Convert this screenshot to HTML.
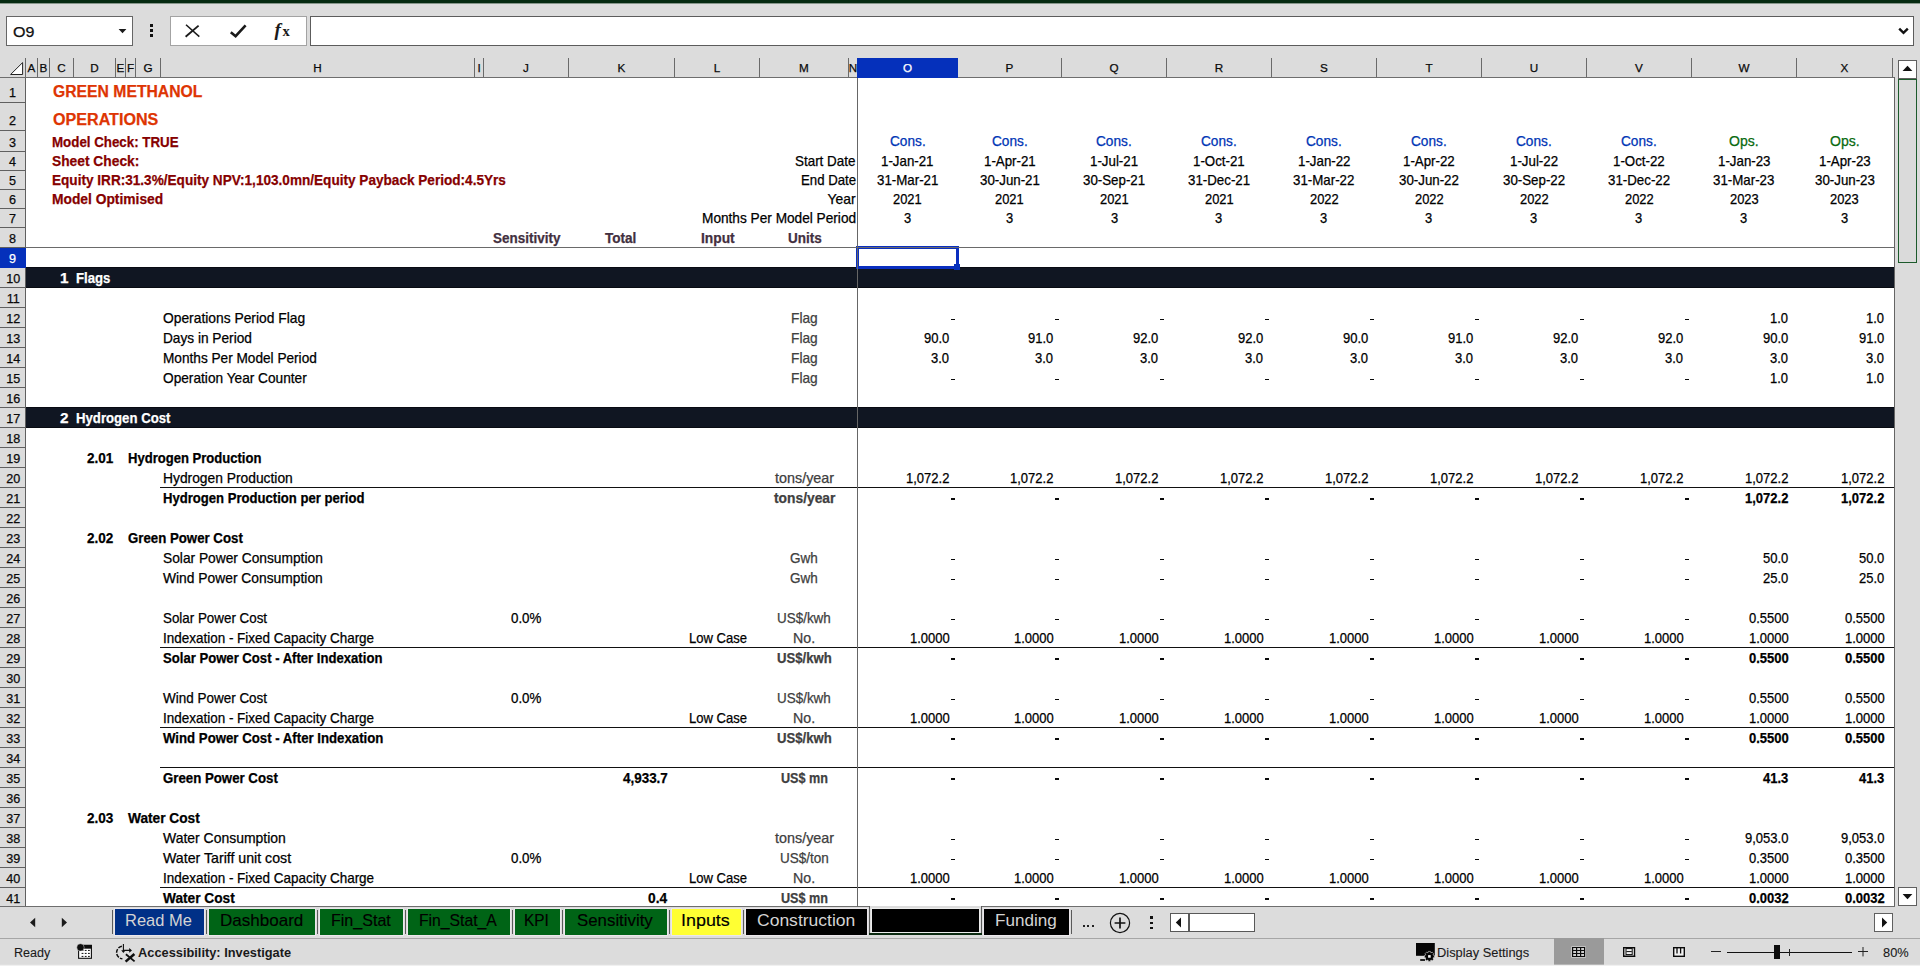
<!DOCTYPE html>
<html><head><meta charset="utf-8"><title>Operations</title>
<style>html,body{margin:0;padding:0}
body{width:1920px;height:966px;background:#dcdcdc;position:relative;overflow:hidden;font-family:"Liberation Sans",sans-serif}
body>div,body>svg,body>span{position:absolute;display:block}
span.t{white-space:pre;line-height:20px;transform-origin:0 0}
span.fx{font-family:"Liberation Serif",serif;font-style:italic;font-weight:700}
</style></head><body>
<div style="left:0px;top:0px;width:1920px;height:3px;background:#052a10;"></div>
<div style="left:0px;top:3px;width:1920px;height:1px;background:#86968a;"></div>
<div style="left:6px;top:16px;width:125px;height:28px;background:#fff;border:1px solid #666;"></div>
<svg style="left:118px;top:28px" width="9" height="6" viewBox="0 0 9 6"><path d="M0.6 1 H8.4 L4.5 5.2 Z" fill="#1a1a1a"/></svg>
<div style="left:149.8px;top:24.3px;width:3.4px;height:2.6px;background:#111;"></div>
<div style="left:149.8px;top:29.3px;width:3.4px;height:2.6px;background:#111;"></div>
<div style="left:149.8px;top:34.3px;width:3.4px;height:2.6px;background:#111;"></div>
<div style="left:170px;top:16px;width:135px;height:28px;background:#fff;border:1px solid #a3a3a3;"></div>
<svg style="left:184px;top:23px" width="18" height="16" viewBox="0 0 18 16"><path d="M2 1.8 L15.3 13.6" stroke="#1a1a1a" stroke-width="1.5" fill="none"/><path d="M14.6 2.6 L1.6 13.8" stroke="#1a1a1a" stroke-width="1.9" fill="none"/></svg>
<svg style="left:229px;top:23px" width="19" height="16" viewBox="0 0 19 16"><path d="M1.8 9.2 L6.6 13.2 L16.6 2.4" stroke="#1a1a1a" stroke-width="2.6" fill="none" stroke-linejoin="miter"/></svg>
<div style="left:310px;top:16px;width:1602px;height:28px;background:#fff;border:1px solid #5c5c5c;"></div>
<svg style="left:1898px;top:27px" width="11" height="8" viewBox="0 0 11 8"><path d="M1.2 1.6 L5.5 5.8 L9.8 1.6" stroke="#111" stroke-width="2.4" fill="none"/></svg>
<div style="left:26px;top:78px;width:1868px;height:829px;background:#fff;"></div>
<div style="left:0px;top:77px;width:1895px;height:1px;background:#6e6e6e;"></div>
<div style="left:25px;top:58px;width:1px;height:19px;background:#6a6a6a;"></div>
<div style="left:37px;top:58px;width:1px;height:19px;background:#6a6a6a;"></div>
<div style="left:49px;top:58px;width:1px;height:19px;background:#6a6a6a;"></div>
<div style="left:73px;top:58px;width:1px;height:19px;background:#6a6a6a;"></div>
<div style="left:115px;top:58px;width:1px;height:19px;background:#6a6a6a;"></div>
<div style="left:125px;top:58px;width:1px;height:19px;background:#6a6a6a;"></div>
<div style="left:135px;top:58px;width:1px;height:19px;background:#6a6a6a;"></div>
<div style="left:160px;top:58px;width:1px;height:19px;background:#6a6a6a;"></div>
<div style="left:474px;top:58px;width:1px;height:19px;background:#6a6a6a;"></div>
<div style="left:483px;top:58px;width:1px;height:19px;background:#6a6a6a;"></div>
<div style="left:568px;top:58px;width:1px;height:19px;background:#6a6a6a;"></div>
<div style="left:674px;top:58px;width:1px;height:19px;background:#6a6a6a;"></div>
<div style="left:759px;top:58px;width:1px;height:19px;background:#6a6a6a;"></div>
<div style="left:848px;top:58px;width:1px;height:19px;background:#6a6a6a;"></div>
<div style="left:957px;top:58px;width:1px;height:19px;background:#6a6a6a;"></div>
<div style="left:1061px;top:58px;width:1px;height:19px;background:#6a6a6a;"></div>
<div style="left:1166px;top:58px;width:1px;height:19px;background:#6a6a6a;"></div>
<div style="left:1271px;top:58px;width:1px;height:19px;background:#6a6a6a;"></div>
<div style="left:1376px;top:58px;width:1px;height:19px;background:#6a6a6a;"></div>
<div style="left:1481px;top:58px;width:1px;height:19px;background:#6a6a6a;"></div>
<div style="left:1586px;top:58px;width:1px;height:19px;background:#6a6a6a;"></div>
<div style="left:1691px;top:58px;width:1px;height:19px;background:#6a6a6a;"></div>
<div style="left:1796px;top:58px;width:1px;height:19px;background:#6a6a6a;"></div>
<div style="left:1892px;top:58px;width:1px;height:19px;background:#6a6a6a;"></div>
<div style="left:857px;top:58px;width:1px;height:19px;background:#6a6a6a;"></div>
<div style="left:857px;top:58px;width:101px;height:20px;background:#0530bb;"></div>
<svg style="left:9px;top:61px" width="16" height="15" viewBox="0 0 16 15"><path d="M1.6 13.5 L13.6 1.6 L13.6 13.5 Z" fill="#fff" stroke="#222" stroke-width="1"/></svg>
<div style="left:0px;top:102px;width:25px;height:1px;background:#606060;"></div>
<div style="left:0px;top:130px;width:25px;height:1px;background:#606060;"></div>
<div style="left:0px;top:151px;width:25px;height:1px;background:#606060;"></div>
<div style="left:0px;top:170px;width:25px;height:1px;background:#606060;"></div>
<div style="left:0px;top:189px;width:25px;height:1px;background:#606060;"></div>
<div style="left:0px;top:208px;width:25px;height:1px;background:#606060;"></div>
<div style="left:0px;top:227px;width:25px;height:1px;background:#606060;"></div>
<div style="left:0px;top:247px;width:25px;height:1px;background:#606060;"></div>
<div style="left:0px;top:267px;width:25px;height:1px;background:#606060;"></div>
<div style="left:0px;top:287px;width:25px;height:1px;background:#606060;"></div>
<div style="left:0px;top:307px;width:25px;height:1px;background:#606060;"></div>
<div style="left:0px;top:327px;width:25px;height:1px;background:#606060;"></div>
<div style="left:0px;top:347px;width:25px;height:1px;background:#606060;"></div>
<div style="left:0px;top:367px;width:25px;height:1px;background:#606060;"></div>
<div style="left:0px;top:387px;width:25px;height:1px;background:#606060;"></div>
<div style="left:0px;top:407px;width:25px;height:1px;background:#606060;"></div>
<div style="left:0px;top:427px;width:25px;height:1px;background:#606060;"></div>
<div style="left:0px;top:447px;width:25px;height:1px;background:#606060;"></div>
<div style="left:0px;top:467px;width:25px;height:1px;background:#606060;"></div>
<div style="left:0px;top:487px;width:25px;height:1px;background:#606060;"></div>
<div style="left:0px;top:507px;width:25px;height:1px;background:#606060;"></div>
<div style="left:0px;top:527px;width:25px;height:1px;background:#606060;"></div>
<div style="left:0px;top:547px;width:25px;height:1px;background:#606060;"></div>
<div style="left:0px;top:567px;width:25px;height:1px;background:#606060;"></div>
<div style="left:0px;top:587px;width:25px;height:1px;background:#606060;"></div>
<div style="left:0px;top:607px;width:25px;height:1px;background:#606060;"></div>
<div style="left:0px;top:627px;width:25px;height:1px;background:#606060;"></div>
<div style="left:0px;top:647px;width:25px;height:1px;background:#606060;"></div>
<div style="left:0px;top:667px;width:25px;height:1px;background:#606060;"></div>
<div style="left:0px;top:687px;width:25px;height:1px;background:#606060;"></div>
<div style="left:0px;top:707px;width:25px;height:1px;background:#606060;"></div>
<div style="left:0px;top:727px;width:25px;height:1px;background:#606060;"></div>
<div style="left:0px;top:747px;width:25px;height:1px;background:#606060;"></div>
<div style="left:0px;top:767px;width:25px;height:1px;background:#606060;"></div>
<div style="left:0px;top:787px;width:25px;height:1px;background:#606060;"></div>
<div style="left:0px;top:807px;width:25px;height:1px;background:#606060;"></div>
<div style="left:0px;top:827px;width:25px;height:1px;background:#606060;"></div>
<div style="left:0px;top:847px;width:25px;height:1px;background:#606060;"></div>
<div style="left:0px;top:867px;width:25px;height:1px;background:#606060;"></div>
<div style="left:0px;top:887px;width:25px;height:1px;background:#606060;"></div>
<div style="left:25px;top:78px;width:1px;height:829px;background:#606060;"></div>
<div style="left:0px;top:248px;width:26px;height:20px;background:#0530bb;"></div>
<div style="left:1894px;top:77px;width:1px;height:830px;background:#646464;"></div>
<div style="left:0px;top:906px;width:1895px;height:1px;background:#6e6e6e;"></div>
<div style="left:26px;top:267px;width:1868px;height:21px;background:#101622;"></div>
<div style="left:26px;top:267px;width:1868px;height:1px;background:#080b12;"></div>
<div style="left:26px;top:287px;width:1868px;height:1px;background:#080b12;"></div>
<div style="left:26px;top:407px;width:1868px;height:21px;background:#101622;"></div>
<div style="left:26px;top:407px;width:1868px;height:1px;background:#080b12;"></div>
<div style="left:26px;top:427px;width:1868px;height:1px;background:#080b12;"></div>
<div style="left:160px;top:487px;width:1734px;height:1px;background:#111;"></div>
<div style="left:160px;top:647px;width:1734px;height:1px;background:#111;"></div>
<div style="left:160px;top:727px;width:1734px;height:1px;background:#111;"></div>
<div style="left:160px;top:767px;width:1734px;height:1px;background:#111;"></div>
<div style="left:160px;top:887px;width:1734px;height:1px;background:#111;"></div>
<div style="left:856px;top:246px;width:97px;height:17px;background:transparent;border:3px solid #0a2fc0;"></div>
<div style="left:954px;top:264px;width:6px;height:6px;background:#0530bb;"></div>
<div style="left:26px;top:247px;width:1868px;height:1px;background:#6a6a6a;"></div>
<div style="left:857px;top:78px;width:1px;height:829px;background:#666;"></div>
<div style="left:1898px;top:60px;width:17px;height:17px;background:#fff;border:1px solid #606060;"></div>
<svg style="left:1902px;top:65px" width="11" height="7" viewBox="0 0 11 7"><path d="M0.6 6 L5.5 0.8 L10.4 6 Z" fill="#111"/></svg>
<div style="left:1898px;top:79px;width:17px;height:182px;background:#dadada;border:1px solid #1c5a2b;"></div>
<div style="left:1898px;top:887px;width:17px;height:17px;background:#fff;border:1px solid #606060;"></div>
<svg style="left:1902px;top:893px" width="11" height="7" viewBox="0 0 11 7"><path d="M0.6 1 L10.4 1 L5.5 6.2 Z" fill="#111"/></svg>
<div style="left:1170px;top:913px;width:83px;height:17px;background:#fff;border:1px solid #585858;"></div>
<div style="left:1188px;top:913px;width:2px;height:19px;background:#585858;"></div>
<svg style="left:1175px;top:917px" width="7" height="11" viewBox="0 0 7 11"><path d="M6 0.6 L0.8 5.5 L6 10.4 Z" fill="#111"/></svg>
<div style="left:1874px;top:913px;width:17px;height:17px;background:#fff;border:1px solid #606060;"></div>
<svg style="left:1880.6px;top:917px" width="7" height="11" viewBox="0 0 7 11"><path d="M1 0.6 L6.2 5.5 L1 10.4 Z" fill="#111"/></svg>
<svg style="left:29px;top:917px" width="7" height="11" viewBox="0 0 7 11"><path d="M6.2 0.8 L1 5.5 L6.2 10.2 Z" fill="#1a1a1a"/></svg>
<svg style="left:61px;top:917px" width="7" height="11" viewBox="0 0 7 11"><path d="M0.8 0.8 L6 5.5 L0.8 10.2 Z" fill="#1a1a1a"/></svg>
<div style="left:114px;top:908px;width:91px;height:28px;background:#ebe7eb;"></div>
<div style="left:115px;top:909px;width:89px;height:26px;background:#003087;"></div>
<div style="left:208px;top:908px;width:108px;height:28px;background:#ebe7eb;"></div>
<div style="left:209px;top:909px;width:106px;height:26px;background:#006416;"></div>
<div style="left:319px;top:908px;width:85px;height:28px;background:#ebe7eb;"></div>
<div style="left:320px;top:909px;width:83px;height:26px;background:#006416;"></div>
<div style="left:407px;top:908px;width:104px;height:28px;background:#ebe7eb;"></div>
<div style="left:408px;top:909px;width:102px;height:26px;background:#006416;"></div>
<div style="left:514px;top:908px;width:47px;height:28px;background:#ebe7eb;"></div>
<div style="left:515px;top:909px;width:45px;height:26px;background:#006416;"></div>
<div style="left:564px;top:908px;width:104px;height:28px;background:#ebe7eb;"></div>
<div style="left:565px;top:909px;width:102px;height:26px;background:#006416;"></div>
<div style="left:671px;top:908px;width:71px;height:28px;background:#ebe7eb;"></div>
<div style="left:672px;top:909px;width:69px;height:26px;background:#ffff33;"></div>
<div style="left:745px;top:908px;width:123px;height:28px;background:#ebe7eb;"></div>
<div style="left:746px;top:909px;width:121px;height:26px;background:#000;"></div>
<div style="left:983px;top:908px;width:87px;height:28px;background:#ebe7eb;"></div>
<div style="left:984px;top:909px;width:85px;height:26px;background:#000;"></div>
<div style="left:112px;top:910px;width:1px;height:24px;background:#5a5a5a;"></div>
<div style="left:206px;top:910px;width:1px;height:24px;background:#5a5a5a;"></div>
<div style="left:317px;top:910px;width:1px;height:24px;background:#5a5a5a;"></div>
<div style="left:405px;top:910px;width:1px;height:24px;background:#5a5a5a;"></div>
<div style="left:512px;top:910px;width:1px;height:24px;background:#5a5a5a;"></div>
<div style="left:562px;top:910px;width:1px;height:24px;background:#5a5a5a;"></div>
<div style="left:669px;top:910px;width:1px;height:24px;background:#5a5a5a;"></div>
<div style="left:743px;top:910px;width:1px;height:24px;background:#5a5a5a;"></div>
<div style="left:1071px;top:910px;width:1px;height:24px;background:#5a5a5a;"></div>
<div style="left:870px;top:906px;width:111px;height:28px;background:#dcdcdc;"></div>
<div style="left:869px;top:906px;width:1px;height:27px;background:#5a5a5a;"></div>
<div style="left:981px;top:906px;width:1px;height:27px;background:#5a5a5a;"></div>
<div style="left:871px;top:908px;width:109px;height:25px;background:#ececec;"></div>
<div style="left:872px;top:909px;width:107px;height:23px;background:#000;"></div>
<div style="left:869px;top:933px;width:113px;height:2px;background:#0a2a10;"></div>
<div style="left:1082.5px;top:924.6px;width:2.2px;height:2.2px;background:#222;"></div>
<div style="left:1087.3px;top:924.6px;width:2.2px;height:2.2px;background:#222;"></div>
<div style="left:1092.1px;top:924.6px;width:2.2px;height:2.2px;background:#222;"></div>
<svg style="left:1109px;top:912px" width="22" height="22" viewBox="0 0 22 22"><circle cx="11" cy="11" r="9.6" fill="none" stroke="#111" stroke-width="1.2"/><path d="M11 5.6 V16.4 M5.6 11 H16.4" stroke="#111" stroke-width="1.7"/></svg>
<div style="left:1150.2px;top:916.4px;width:3.2px;height:2.6px;background:#111;"></div>
<div style="left:1150.2px;top:921.6px;width:3.2px;height:2.6px;background:#111;"></div>
<div style="left:1150.2px;top:926.8px;width:3.2px;height:2.6px;background:#111;"></div>
<div style="left:0px;top:938px;width:1920px;height:1px;background:#a6a6a6;"></div>
<div style="left:0px;top:965px;width:1920px;height:1px;background:#f0f0f0;"></div>
<div style="left:0px;top:964px;width:1920px;height:1px;background:#e0e0e0;"></div>
<svg style="left:0px;top:938px" width="1920" height="28" viewBox="0 938 1920 28">
<rect x="78.6" y="945.4" width="12.8" height="12.9" fill="#fff" stroke="#0d0d0d" stroke-width="1.1"/>
<rect x="78.1" y="944.9" width="13.8" height="3.8" fill="#0d0d0d"/>
<rect x="81.6" y="949.9" width="1.8" height="1" fill="#0d0d0d"/>
<rect x="84.8" y="949.9" width="1.8" height="1" fill="#0d0d0d"/>
<rect x="88.0" y="949.9" width="1.8" height="1" fill="#0d0d0d"/>
<rect x="81.6" y="952.9" width="1.8" height="1" fill="#0d0d0d"/>
<rect x="84.8" y="952.9" width="1.8" height="1" fill="#0d0d0d"/>
<rect x="88.0" y="952.9" width="1.8" height="1" fill="#0d0d0d"/>
<rect x="81.6" y="955.9" width="1.8" height="1" fill="#0d0d0d"/>
<rect x="84.8" y="955.9" width="1.8" height="1" fill="#0d0d0d"/>
<rect x="88.0" y="955.9" width="1.8" height="1" fill="#0d0d0d"/>
<circle cx="80.5" cy="947.4" r="3.7" fill="#0d0d0d" stroke="#dcdcdc" stroke-width="0.5"/>
<path d="M121.9 946.3 A6.3 6.3 0 0 0 122.4 958.8" fill="none" stroke="#0d0d0d" stroke-width="1.5" stroke-dasharray="3.9 1.2"/>
<path d="M123.4 944 V951.6 M123.4 950.4 H130.6" fill="none" stroke="#0d0d0d" stroke-width="1.1"/>
<path d="M121.2 950.2 H125.6 L123.4 953 Z M129.2 948 L132 950.4 L129.2 952.8 Z" fill="#0d0d0d"/>
<path d="M125.9 954.2 L134.6 961.4" stroke="#0d0d0d" stroke-width="1.8"/>
<path d="M134.4 954 L125.6 961.6" stroke="#0d0d0d" stroke-width="2.5"/>
<rect x="1416" y="943" width="18.8" height="12.8" fill="#050505"/>
<path d="M1420.2 960 H1425" stroke="#050505" stroke-width="1.7"/>
<path d="M1434.40 955.39 L1434.40 957.41 L1433.01 957.88 L1433.00 957.90 L1433.65 959.22 L1432.22 960.65 L1430.90 960.00 L1430.88 960.01 L1430.41 961.40 L1428.39 961.40 L1427.92 960.01 L1427.90 960.00 L1426.58 960.65 L1425.15 959.22 L1425.80 957.90 L1425.79 957.88 L1424.40 957.41 L1424.40 955.39 L1425.79 954.92 L1425.80 954.90 L1425.15 953.58 L1426.58 952.15 L1427.90 952.80 L1427.92 952.79 L1428.39 951.40 L1430.41 951.40 L1430.88 952.79 L1430.90 952.80 L1432.22 952.15 L1433.65 953.58 L1433.00 954.90 L1433.01 954.92 Z" fill="#050505" stroke="#dcdcdc" stroke-width="0.6"/>
<rect x="1428.1" y="955.1" width="2.6" height="2.6" fill="#f4f4f4"/>
<rect x="1554" y="938" width="50" height="26.6" fill="#9a9a9a"/>
<rect x="1571.4" y="946.4" width="14.4" height="11.2" fill="#dcdcdc"/>
<rect x="1572" y="947" width="13.2" height="10" fill="#0a0a0a"/>
<rect x="1573.2" y="948.2" width="2.8" height="1.6" fill="#fff"/>
<rect x="1577.2" y="948.2" width="2.8" height="1.6" fill="#fff"/>
<rect x="1581.2" y="948.2" width="2.8" height="1.6" fill="#fff"/>
<rect x="1573.2" y="951.2" width="2.8" height="1.6" fill="#fff"/>
<rect x="1577.2" y="951.2" width="2.8" height="1.6" fill="#fff"/>
<rect x="1581.2" y="951.2" width="2.8" height="1.6" fill="#fff"/>
<rect x="1573.2" y="954.2" width="2.8" height="1.6" fill="#fff"/>
<rect x="1577.2" y="954.2" width="2.8" height="1.6" fill="#fff"/>
<rect x="1581.2" y="954.2" width="2.8" height="1.6" fill="#fff"/>
<rect x="1623.7" y="947.7" width="10.8" height="8.6" fill="#f4f4f4" stroke="#0a0a0a" stroke-width="1.4"/>
<rect x="1626" y="948.6" width="6.2" height="6.0" fill="none" stroke="#0a0a0a" stroke-width="1"/>
<path d="M1626.4 951.6 H1631.8" stroke="#0a0a0a" stroke-width="1"/>
<path d="M1623 956.4 H1635.2" stroke="#0a0a0a" stroke-width="1.2"/>
<rect x="1673.7" y="947.7" width="10.6" height="8.6" fill="#f4f4f4" stroke="#0a0a0a" stroke-width="1.4"/>
<path d="M1677 947.4 V953.4 M1680.6 947.4 V953.4" stroke="#0a0a0a" stroke-width="1.3"/>
<path d="M1674 954 H1683" stroke="#dcdcdc" stroke-width="0.1"/>
<rect x="1711" y="951" width="10" height="1" fill="#222"/>
<rect x="1727" y="952" width="125" height="1" fill="#111"/>
<rect x="1774" y="945" width="6" height="14" fill="#0d0d0d"/>
<rect x="1789" y="949" width="1" height="7" fill="#222"/>
<rect x="1858" y="951" width="10" height="1" fill="#222"/>
<rect x="1862.5" y="947" width="1" height="9.4" fill="#222"/>
</svg>
<span class="t fx" style="left:274.5px;top:19.5px;font-size:19px;color:#1a1a1a;letter-spacing:-0.2px">f<span style="font-size:14.5px;position:relative;top:0px;font-style:normal;margin-left:1.8px">x</span></span>
<span class="t" style="top:82.00px;font-size:16.76px;color:#de3503;font-weight:700;-webkit-text-stroke:0.25px #de3503;left:52.60px;transform:scaleX(0.9389);">GREEN METHANOL</span>
<span class="t" style="top:110.00px;font-size:16.76px;color:#de3503;font-weight:700;-webkit-text-stroke:0.25px #de3503;left:52.60px;transform:scaleX(0.9615);">OPERATIONS</span>
<span class="t" style="top:132.00px;font-size:15.2px;color:#860000;font-weight:700;-webkit-text-stroke:0.25px #860000;left:51.70px;transform:scaleX(0.8774);">Model Check: TRUE</span>
<span class="t" style="top:151.00px;font-size:15.2px;color:#860000;font-weight:700;-webkit-text-stroke:0.25px #860000;left:51.90px;transform:scaleX(0.9072);">Sheet Check:</span>
<span class="t" style="top:170.00px;font-size:15.2px;color:#860000;font-weight:700;-webkit-text-stroke:0.25px #860000;left:51.70px;transform:scaleX(0.8948);">Equity IRR:31.3%/Equity NPV:1,103.0mn/Equity Payback Period:4.5Yrs</span>
<span class="t" style="top:189.00px;font-size:15.2px;color:#860000;font-weight:700;-webkit-text-stroke:0.25px #860000;left:51.70px;transform:scaleX(0.9088);">Model Optimised</span>
<span class="t" style="top:151.00px;font-size:13.9px;color:#000;-webkit-text-stroke:0.25px #000;left:795.30px;transform:scaleX(0.9657);">Start Date</span>
<span class="t" style="top:170.00px;font-size:13.9px;color:#000;-webkit-text-stroke:0.25px #000;left:800.60px;transform:scaleX(0.9513);">End Date</span>
<span class="t" style="top:189.00px;font-size:13.9px;color:#000;-webkit-text-stroke:0.25px #000;left:827.60px;">Year</span>
<span class="t" style="top:208.00px;font-size:13.9px;color:#000;-webkit-text-stroke:0.25px #000;left:701.60px;transform:scaleX(0.9832);">Months Per Model Period</span>
<span class="t" style="top:228.00px;font-size:13.9px;color:#43303f;font-weight:700;-webkit-text-stroke:0.25px #43303f;left:492.60px;transform:scaleX(0.9700);">Sensitivity</span>
<span class="t" style="top:228.00px;font-size:13.9px;color:#43303f;font-weight:700;-webkit-text-stroke:0.25px #43303f;left:605.30px;transform:scaleX(0.9765);">Total</span>
<span class="t" style="top:228.00px;font-size:13.9px;color:#43303f;font-weight:700;-webkit-text-stroke:0.25px #43303f;left:700.95px;transform:scaleX(0.9925);">Input</span>
<span class="t" style="top:228.00px;font-size:13.9px;color:#43303f;font-weight:700;-webkit-text-stroke:0.25px #43303f;left:787.60px;transform:scaleX(0.9731);">Units</span>
<span class="t" style="top:131.00px;font-size:13.9px;color:#0035b5;-webkit-text-stroke:0.25px #0035b5;left:889.65px;transform:scaleX(0.9836);">Cons.</span>
<span class="t" style="top:131.00px;font-size:13.9px;color:#0035b5;-webkit-text-stroke:0.25px #0035b5;left:991.95px;transform:scaleX(0.9836);">Cons.</span>
<span class="t" style="top:131.00px;font-size:13.9px;color:#0035b5;-webkit-text-stroke:0.25px #0035b5;left:1096.35px;transform:scaleX(0.9836);">Cons.</span>
<span class="t" style="top:131.00px;font-size:13.9px;color:#0035b5;-webkit-text-stroke:0.25px #0035b5;left:1201.15px;transform:scaleX(0.9836);">Cons.</span>
<span class="t" style="top:131.00px;font-size:13.9px;color:#0035b5;-webkit-text-stroke:0.25px #0035b5;left:1306.15px;transform:scaleX(0.9836);">Cons.</span>
<span class="t" style="top:131.00px;font-size:13.9px;color:#0035b5;-webkit-text-stroke:0.25px #0035b5;left:1411.15px;transform:scaleX(0.9836);">Cons.</span>
<span class="t" style="top:131.00px;font-size:13.9px;color:#0035b5;-webkit-text-stroke:0.25px #0035b5;left:1516.15px;transform:scaleX(0.9836);">Cons.</span>
<span class="t" style="top:131.00px;font-size:13.9px;color:#0035b5;-webkit-text-stroke:0.25px #0035b5;left:1621.15px;transform:scaleX(0.9836);">Cons.</span>
<span class="t" style="top:131.00px;font-size:13.9px;color:#096a10;-webkit-text-stroke:0.25px #096a10;left:1729.15px;transform:scaleX(1.0121);">Ops.</span>
<span class="t" style="top:131.00px;font-size:13.9px;color:#096a10;-webkit-text-stroke:0.25px #096a10;left:1829.85px;transform:scaleX(1.0121);">Ops.</span>
<span class="t" style="top:151.00px;font-size:13.9px;color:#000;-webkit-text-stroke:0.25px #000;left:881.24px;transform:scaleX(0.9580);">1-Jan-21</span>
<span class="t" style="top:151.00px;font-size:13.9px;color:#000;-webkit-text-stroke:0.25px #000;left:983.91px;transform:scaleX(0.9580);">1-Apr-21</span>
<span class="t" style="top:151.00px;font-size:13.9px;color:#000;-webkit-text-stroke:0.25px #000;left:1090.16px;transform:scaleX(0.9580);">1-Jul-21</span>
<span class="t" style="top:151.00px;font-size:13.9px;color:#000;-webkit-text-stroke:0.25px #000;left:1193.11px;transform:scaleX(0.9580);">1-Oct-21</span>
<span class="t" style="top:151.00px;font-size:13.9px;color:#000;-webkit-text-stroke:0.25px #000;left:1297.74px;transform:scaleX(0.9580);">1-Jan-22</span>
<span class="t" style="top:151.00px;font-size:13.9px;color:#000;-webkit-text-stroke:0.25px #000;left:1403.11px;transform:scaleX(0.9580);">1-Apr-22</span>
<span class="t" style="top:151.00px;font-size:13.9px;color:#000;-webkit-text-stroke:0.25px #000;left:1509.96px;transform:scaleX(0.9580);">1-Jul-22</span>
<span class="t" style="top:151.00px;font-size:13.9px;color:#000;-webkit-text-stroke:0.25px #000;left:1613.11px;transform:scaleX(0.9580);">1-Oct-22</span>
<span class="t" style="top:151.00px;font-size:13.9px;color:#000;-webkit-text-stroke:0.25px #000;left:1717.74px;transform:scaleX(0.9580);">1-Jan-23</span>
<span class="t" style="top:151.00px;font-size:13.9px;color:#000;-webkit-text-stroke:0.25px #000;left:1818.81px;transform:scaleX(0.9580);">1-Apr-23</span>
<span class="t" style="top:170.00px;font-size:13.9px;color:#000;-webkit-text-stroke:0.25px #000;left:876.81px;transform:scaleX(0.9580);">31-Mar-21</span>
<span class="t" style="top:170.00px;font-size:13.9px;color:#000;-webkit-text-stroke:0.25px #000;left:979.83px;transform:scaleX(0.9580);">30-Jun-21</span>
<span class="t" style="top:170.00px;font-size:13.9px;color:#000;-webkit-text-stroke:0.25px #000;left:1083.12px;transform:scaleX(0.9580);">30-Sep-21</span>
<span class="t" style="top:170.00px;font-size:13.9px;color:#000;-webkit-text-stroke:0.25px #000;left:1187.93px;transform:scaleX(0.9580);">31-Dec-21</span>
<span class="t" style="top:170.00px;font-size:13.9px;color:#000;-webkit-text-stroke:0.25px #000;left:1293.31px;transform:scaleX(0.9580);">31-Mar-22</span>
<span class="t" style="top:170.00px;font-size:13.9px;color:#000;-webkit-text-stroke:0.25px #000;left:1399.03px;transform:scaleX(0.9580);">30-Jun-22</span>
<span class="t" style="top:170.00px;font-size:13.9px;color:#000;-webkit-text-stroke:0.25px #000;left:1502.92px;transform:scaleX(0.9580);">30-Sep-22</span>
<span class="t" style="top:170.00px;font-size:13.9px;color:#000;-webkit-text-stroke:0.25px #000;left:1607.93px;transform:scaleX(0.9580);">31-Dec-22</span>
<span class="t" style="top:170.00px;font-size:13.9px;color:#000;-webkit-text-stroke:0.25px #000;left:1713.31px;transform:scaleX(0.9580);">31-Mar-23</span>
<span class="t" style="top:170.00px;font-size:13.9px;color:#000;-webkit-text-stroke:0.25px #000;left:1814.73px;transform:scaleX(0.9580);">30-Jun-23</span>
<span class="t" style="top:189.00px;font-size:13.9px;color:#000;-webkit-text-stroke:0.25px #000;left:893.13px;transform:scaleX(0.9300);">2021</span>
<span class="t" style="top:189.00px;font-size:13.9px;color:#000;-webkit-text-stroke:0.25px #000;left:995.43px;transform:scaleX(0.9300);">2021</span>
<span class="t" style="top:189.00px;font-size:13.9px;color:#000;-webkit-text-stroke:0.25px #000;left:1099.83px;transform:scaleX(0.9300);">2021</span>
<span class="t" style="top:189.00px;font-size:13.9px;color:#000;-webkit-text-stroke:0.25px #000;left:1204.63px;transform:scaleX(0.9300);">2021</span>
<span class="t" style="top:189.00px;font-size:13.9px;color:#000;-webkit-text-stroke:0.25px #000;left:1309.63px;transform:scaleX(0.9300);">2022</span>
<span class="t" style="top:189.00px;font-size:13.9px;color:#000;-webkit-text-stroke:0.25px #000;left:1414.63px;transform:scaleX(0.9300);">2022</span>
<span class="t" style="top:189.00px;font-size:13.9px;color:#000;-webkit-text-stroke:0.25px #000;left:1519.63px;transform:scaleX(0.9300);">2022</span>
<span class="t" style="top:189.00px;font-size:13.9px;color:#000;-webkit-text-stroke:0.25px #000;left:1624.63px;transform:scaleX(0.9300);">2022</span>
<span class="t" style="top:189.00px;font-size:13.9px;color:#000;-webkit-text-stroke:0.25px #000;left:1729.63px;transform:scaleX(0.9300);">2023</span>
<span class="t" style="top:189.00px;font-size:13.9px;color:#000;-webkit-text-stroke:0.25px #000;left:1830.33px;transform:scaleX(0.9300);">2023</span>
<span class="t" style="top:208.00px;font-size:13.9px;color:#000;-webkit-text-stroke:0.25px #000;left:903.90px;transform:scaleX(0.9300);">3</span>
<span class="t" style="top:208.00px;font-size:13.9px;color:#000;-webkit-text-stroke:0.25px #000;left:1006.20px;transform:scaleX(0.9300);">3</span>
<span class="t" style="top:208.00px;font-size:13.9px;color:#000;-webkit-text-stroke:0.25px #000;left:1110.60px;transform:scaleX(0.9300);">3</span>
<span class="t" style="top:208.00px;font-size:13.9px;color:#000;-webkit-text-stroke:0.25px #000;left:1215.40px;transform:scaleX(0.9300);">3</span>
<span class="t" style="top:208.00px;font-size:13.9px;color:#000;-webkit-text-stroke:0.25px #000;left:1320.40px;transform:scaleX(0.9300);">3</span>
<span class="t" style="top:208.00px;font-size:13.9px;color:#000;-webkit-text-stroke:0.25px #000;left:1425.40px;transform:scaleX(0.9300);">3</span>
<span class="t" style="top:208.00px;font-size:13.9px;color:#000;-webkit-text-stroke:0.25px #000;left:1530.40px;transform:scaleX(0.9300);">3</span>
<span class="t" style="top:208.00px;font-size:13.9px;color:#000;-webkit-text-stroke:0.25px #000;left:1635.40px;transform:scaleX(0.9300);">3</span>
<span class="t" style="top:208.00px;font-size:13.9px;color:#000;-webkit-text-stroke:0.25px #000;left:1740.40px;transform:scaleX(0.9300);">3</span>
<span class="t" style="top:208.00px;font-size:13.9px;color:#000;-webkit-text-stroke:0.25px #000;left:1841.10px;transform:scaleX(0.9300);">3</span>
<span class="t" style="top:268.00px;font-size:15.3px;color:#fff;font-weight:700;-webkit-text-stroke:0.25px #fff;left:60.10px;">1</span>
<span class="t" style="top:268.00px;font-size:15.3px;color:#fff;font-weight:700;-webkit-text-stroke:0.25px #fff;left:76.30px;transform:scaleX(0.8610);">Flags</span>
<span class="t" style="top:408.00px;font-size:15.3px;color:#fff;font-weight:700;-webkit-text-stroke:0.25px #fff;left:60.10px;">2</span>
<span class="t" style="top:408.00px;font-size:15.3px;color:#fff;font-weight:700;-webkit-text-stroke:0.25px #fff;left:76.30px;transform:scaleX(0.8610);">Hydrogen Cost</span>
<span class="t" style="top:448.00px;font-size:13.9px;color:#000;font-weight:700;-webkit-text-stroke:0.25px #000;left:87.00px;transform:scaleX(0.9761);">2.01</span>
<span class="t" style="top:448.00px;font-size:13.9px;color:#000;font-weight:700;-webkit-text-stroke:0.25px #000;left:127.60px;transform:scaleX(0.9394);">Hydrogen Production</span>
<span class="t" style="top:528.00px;font-size:13.9px;color:#000;font-weight:700;-webkit-text-stroke:0.25px #000;left:87.00px;transform:scaleX(0.9761);">2.02</span>
<span class="t" style="top:528.00px;font-size:13.9px;color:#000;font-weight:700;-webkit-text-stroke:0.25px #000;left:127.60px;transform:scaleX(0.9533);">Green Power Cost</span>
<span class="t" style="top:808.00px;font-size:13.9px;color:#000;font-weight:700;-webkit-text-stroke:0.25px #000;left:87.00px;transform:scaleX(0.9761);">2.03</span>
<span class="t" style="top:808.00px;font-size:13.9px;color:#000;font-weight:700;-webkit-text-stroke:0.25px #000;left:127.60px;transform:scaleX(0.9861);">Water Cost</span>
<span class="t" style="top:308.00px;font-size:13.9px;color:#000;-webkit-text-stroke:0.25px #000;left:162.60px;transform:scaleX(0.9948);">Operations Period Flag</span>
<span class="t" style="top:308.00px;font-size:13.9px;color:#404040;-webkit-text-stroke:0.25px #404040;left:790.95px;transform:scaleX(0.9877);">Flag</span>
<div style="left:950.5px;top:319px;width:4.0px;height:1px;background:#0a0a0a;"></div>
<div style="left:1054.6px;top:319px;width:4.0px;height:1px;background:#0a0a0a;"></div>
<div style="left:1159.5px;top:319px;width:4.0px;height:1px;background:#0a0a0a;"></div>
<div style="left:1264.5px;top:319px;width:4.0px;height:1px;background:#0a0a0a;"></div>
<div style="left:1369.5px;top:319px;width:4.0px;height:1px;background:#0a0a0a;"></div>
<div style="left:1474.5px;top:319px;width:4.0px;height:1px;background:#0a0a0a;"></div>
<div style="left:1579.5px;top:319px;width:4.0px;height:1px;background:#0a0a0a;"></div>
<div style="left:1684.5px;top:319px;width:4.0px;height:1px;background:#0a0a0a;"></div>
<span class="t" style="top:308.00px;font-size:13.9px;color:#000;-webkit-text-stroke:0.25px #000;left:1770.32px;transform:scaleX(0.9360);">1.0</span>
<span class="t" style="top:308.00px;font-size:13.9px;color:#000;-webkit-text-stroke:0.25px #000;left:1866.22px;transform:scaleX(0.9360);">1.0</span>
<span class="t" style="top:328.00px;font-size:13.9px;color:#000;-webkit-text-stroke:0.25px #000;left:162.60px;transform:scaleX(0.9840);">Days in Period</span>
<span class="t" style="top:328.00px;font-size:13.9px;color:#404040;-webkit-text-stroke:0.25px #404040;left:790.95px;transform:scaleX(0.9877);">Flag</span>
<span class="t" style="top:328.00px;font-size:13.9px;color:#000;-webkit-text-stroke:0.25px #000;left:924.08px;transform:scaleX(0.9360);">90.0</span>
<span class="t" style="top:328.00px;font-size:13.9px;color:#000;-webkit-text-stroke:0.25px #000;left:1028.18px;transform:scaleX(0.9360);">91.0</span>
<span class="t" style="top:328.00px;font-size:13.9px;color:#000;-webkit-text-stroke:0.25px #000;left:1133.08px;transform:scaleX(0.9360);">92.0</span>
<span class="t" style="top:328.00px;font-size:13.9px;color:#000;-webkit-text-stroke:0.25px #000;left:1238.08px;transform:scaleX(0.9360);">92.0</span>
<span class="t" style="top:328.00px;font-size:13.9px;color:#000;-webkit-text-stroke:0.25px #000;left:1343.08px;transform:scaleX(0.9360);">90.0</span>
<span class="t" style="top:328.00px;font-size:13.9px;color:#000;-webkit-text-stroke:0.25px #000;left:1448.08px;transform:scaleX(0.9360);">91.0</span>
<span class="t" style="top:328.00px;font-size:13.9px;color:#000;-webkit-text-stroke:0.25px #000;left:1553.08px;transform:scaleX(0.9360);">92.0</span>
<span class="t" style="top:328.00px;font-size:13.9px;color:#000;-webkit-text-stroke:0.25px #000;left:1658.08px;transform:scaleX(0.9360);">92.0</span>
<span class="t" style="top:328.00px;font-size:13.9px;color:#000;-webkit-text-stroke:0.25px #000;left:1763.08px;transform:scaleX(0.9360);">90.0</span>
<span class="t" style="top:328.00px;font-size:13.9px;color:#000;-webkit-text-stroke:0.25px #000;left:1858.98px;transform:scaleX(0.9360);">91.0</span>
<span class="t" style="top:348.00px;font-size:13.9px;color:#000;-webkit-text-stroke:0.25px #000;left:162.60px;transform:scaleX(0.9813);">Months Per Model Period</span>
<span class="t" style="top:348.00px;font-size:13.9px;color:#404040;-webkit-text-stroke:0.25px #404040;left:790.95px;transform:scaleX(0.9877);">Flag</span>
<span class="t" style="top:348.00px;font-size:13.9px;color:#000;-webkit-text-stroke:0.25px #000;left:931.32px;transform:scaleX(0.9360);">3.0</span>
<span class="t" style="top:348.00px;font-size:13.9px;color:#000;-webkit-text-stroke:0.25px #000;left:1035.42px;transform:scaleX(0.9360);">3.0</span>
<span class="t" style="top:348.00px;font-size:13.9px;color:#000;-webkit-text-stroke:0.25px #000;left:1140.32px;transform:scaleX(0.9360);">3.0</span>
<span class="t" style="top:348.00px;font-size:13.9px;color:#000;-webkit-text-stroke:0.25px #000;left:1245.32px;transform:scaleX(0.9360);">3.0</span>
<span class="t" style="top:348.00px;font-size:13.9px;color:#000;-webkit-text-stroke:0.25px #000;left:1350.32px;transform:scaleX(0.9360);">3.0</span>
<span class="t" style="top:348.00px;font-size:13.9px;color:#000;-webkit-text-stroke:0.25px #000;left:1455.32px;transform:scaleX(0.9360);">3.0</span>
<span class="t" style="top:348.00px;font-size:13.9px;color:#000;-webkit-text-stroke:0.25px #000;left:1560.32px;transform:scaleX(0.9360);">3.0</span>
<span class="t" style="top:348.00px;font-size:13.9px;color:#000;-webkit-text-stroke:0.25px #000;left:1665.32px;transform:scaleX(0.9360);">3.0</span>
<span class="t" style="top:348.00px;font-size:13.9px;color:#000;-webkit-text-stroke:0.25px #000;left:1770.32px;transform:scaleX(0.9360);">3.0</span>
<span class="t" style="top:348.00px;font-size:13.9px;color:#000;-webkit-text-stroke:0.25px #000;left:1866.22px;transform:scaleX(0.9360);">3.0</span>
<span class="t" style="top:368.00px;font-size:13.9px;color:#000;-webkit-text-stroke:0.25px #000;left:162.60px;transform:scaleX(0.9852);">Operation Year Counter</span>
<span class="t" style="top:368.00px;font-size:13.9px;color:#404040;-webkit-text-stroke:0.25px #404040;left:790.95px;transform:scaleX(0.9877);">Flag</span>
<div style="left:950.5px;top:379px;width:4.0px;height:1px;background:#0a0a0a;"></div>
<div style="left:1054.6px;top:379px;width:4.0px;height:1px;background:#0a0a0a;"></div>
<div style="left:1159.5px;top:379px;width:4.0px;height:1px;background:#0a0a0a;"></div>
<div style="left:1264.5px;top:379px;width:4.0px;height:1px;background:#0a0a0a;"></div>
<div style="left:1369.5px;top:379px;width:4.0px;height:1px;background:#0a0a0a;"></div>
<div style="left:1474.5px;top:379px;width:4.0px;height:1px;background:#0a0a0a;"></div>
<div style="left:1579.5px;top:379px;width:4.0px;height:1px;background:#0a0a0a;"></div>
<div style="left:1684.5px;top:379px;width:4.0px;height:1px;background:#0a0a0a;"></div>
<span class="t" style="top:368.00px;font-size:13.9px;color:#000;-webkit-text-stroke:0.25px #000;left:1770.32px;transform:scaleX(0.9360);">1.0</span>
<span class="t" style="top:368.00px;font-size:13.9px;color:#000;-webkit-text-stroke:0.25px #000;left:1866.22px;transform:scaleX(0.9360);">1.0</span>
<span class="t" style="top:468.00px;font-size:13.9px;color:#000;-webkit-text-stroke:0.25px #000;left:162.60px;transform:scaleX(0.9946);">Hydrogen Production</span>
<span class="t" style="top:468.00px;font-size:13.9px;color:#404040;-webkit-text-stroke:0.25px #404040;left:774.75px;transform:scaleX(1.0343);">tons/year</span>
<span class="t" style="top:468.00px;font-size:13.9px;color:#000;-webkit-text-stroke:0.25px #000;left:906.01px;transform:scaleX(0.9360);">1,072.2</span>
<span class="t" style="top:468.00px;font-size:13.9px;color:#000;-webkit-text-stroke:0.25px #000;left:1010.11px;transform:scaleX(0.9360);">1,072.2</span>
<span class="t" style="top:468.00px;font-size:13.9px;color:#000;-webkit-text-stroke:0.25px #000;left:1115.01px;transform:scaleX(0.9360);">1,072.2</span>
<span class="t" style="top:468.00px;font-size:13.9px;color:#000;-webkit-text-stroke:0.25px #000;left:1220.01px;transform:scaleX(0.9360);">1,072.2</span>
<span class="t" style="top:468.00px;font-size:13.9px;color:#000;-webkit-text-stroke:0.25px #000;left:1325.01px;transform:scaleX(0.9360);">1,072.2</span>
<span class="t" style="top:468.00px;font-size:13.9px;color:#000;-webkit-text-stroke:0.25px #000;left:1430.01px;transform:scaleX(0.9360);">1,072.2</span>
<span class="t" style="top:468.00px;font-size:13.9px;color:#000;-webkit-text-stroke:0.25px #000;left:1535.01px;transform:scaleX(0.9360);">1,072.2</span>
<span class="t" style="top:468.00px;font-size:13.9px;color:#000;-webkit-text-stroke:0.25px #000;left:1640.01px;transform:scaleX(0.9360);">1,072.2</span>
<span class="t" style="top:468.00px;font-size:13.9px;color:#000;-webkit-text-stroke:0.25px #000;left:1745.01px;transform:scaleX(0.9360);">1,072.2</span>
<span class="t" style="top:468.00px;font-size:13.9px;color:#000;-webkit-text-stroke:0.25px #000;left:1840.91px;transform:scaleX(0.9360);">1,072.2</span>
<span class="t" style="top:488.00px;font-size:13.9px;color:#000;font-weight:700;-webkit-text-stroke:0.25px #000;left:162.60px;transform:scaleX(0.9421);">Hydrogen Production per period</span>
<span class="t" style="top:488.00px;font-size:13.9px;color:#404040;font-weight:700;-webkit-text-stroke:0.25px #404040;left:773.60px;transform:scaleX(0.9941);">tons/year</span>
<div style="left:950.5px;top:498px;width:4.0px;height:2px;background:#0a0a0a;"></div>
<div style="left:1054.6px;top:498px;width:4.0px;height:2px;background:#0a0a0a;"></div>
<div style="left:1159.5px;top:498px;width:4.0px;height:2px;background:#0a0a0a;"></div>
<div style="left:1264.5px;top:498px;width:4.0px;height:2px;background:#0a0a0a;"></div>
<div style="left:1369.5px;top:498px;width:4.0px;height:2px;background:#0a0a0a;"></div>
<div style="left:1474.5px;top:498px;width:4.0px;height:2px;background:#0a0a0a;"></div>
<div style="left:1579.5px;top:498px;width:4.0px;height:2px;background:#0a0a0a;"></div>
<div style="left:1684.5px;top:498px;width:4.0px;height:2px;background:#0a0a0a;"></div>
<span class="t" style="top:488.00px;font-size:13.9px;color:#000;font-weight:700;-webkit-text-stroke:0.25px #000;left:1745.01px;transform:scaleX(0.9360);">1,072.2</span>
<span class="t" style="top:488.00px;font-size:13.9px;color:#000;font-weight:700;-webkit-text-stroke:0.25px #000;left:1840.91px;transform:scaleX(0.9360);">1,072.2</span>
<span class="t" style="top:548.00px;font-size:13.9px;color:#000;-webkit-text-stroke:0.25px #000;left:162.60px;transform:scaleX(0.9902);">Solar Power Consumption</span>
<span class="t" style="top:548.00px;font-size:13.9px;color:#404040;-webkit-text-stroke:0.25px #404040;left:790.40px;transform:scaleX(0.9733);">Gwh</span>
<div style="left:950.5px;top:559px;width:4.0px;height:1px;background:#0a0a0a;"></div>
<div style="left:1054.6px;top:559px;width:4.0px;height:1px;background:#0a0a0a;"></div>
<div style="left:1159.5px;top:559px;width:4.0px;height:1px;background:#0a0a0a;"></div>
<div style="left:1264.5px;top:559px;width:4.0px;height:1px;background:#0a0a0a;"></div>
<div style="left:1369.5px;top:559px;width:4.0px;height:1px;background:#0a0a0a;"></div>
<div style="left:1474.5px;top:559px;width:4.0px;height:1px;background:#0a0a0a;"></div>
<div style="left:1579.5px;top:559px;width:4.0px;height:1px;background:#0a0a0a;"></div>
<div style="left:1684.5px;top:559px;width:4.0px;height:1px;background:#0a0a0a;"></div>
<span class="t" style="top:548.00px;font-size:13.9px;color:#000;-webkit-text-stroke:0.25px #000;left:1763.08px;transform:scaleX(0.9360);">50.0</span>
<span class="t" style="top:548.00px;font-size:13.9px;color:#000;-webkit-text-stroke:0.25px #000;left:1858.98px;transform:scaleX(0.9360);">50.0</span>
<span class="t" style="top:568.00px;font-size:13.9px;color:#000;-webkit-text-stroke:0.25px #000;left:162.60px;transform:scaleX(0.9951);">Wind Power Consumption</span>
<span class="t" style="top:568.00px;font-size:13.9px;color:#404040;-webkit-text-stroke:0.25px #404040;left:790.40px;transform:scaleX(0.9733);">Gwh</span>
<div style="left:950.5px;top:579px;width:4.0px;height:1px;background:#0a0a0a;"></div>
<div style="left:1054.6px;top:579px;width:4.0px;height:1px;background:#0a0a0a;"></div>
<div style="left:1159.5px;top:579px;width:4.0px;height:1px;background:#0a0a0a;"></div>
<div style="left:1264.5px;top:579px;width:4.0px;height:1px;background:#0a0a0a;"></div>
<div style="left:1369.5px;top:579px;width:4.0px;height:1px;background:#0a0a0a;"></div>
<div style="left:1474.5px;top:579px;width:4.0px;height:1px;background:#0a0a0a;"></div>
<div style="left:1579.5px;top:579px;width:4.0px;height:1px;background:#0a0a0a;"></div>
<div style="left:1684.5px;top:579px;width:4.0px;height:1px;background:#0a0a0a;"></div>
<span class="t" style="top:568.00px;font-size:13.9px;color:#000;-webkit-text-stroke:0.25px #000;left:1763.08px;transform:scaleX(0.9360);">25.0</span>
<span class="t" style="top:568.00px;font-size:13.9px;color:#000;-webkit-text-stroke:0.25px #000;left:1858.98px;transform:scaleX(0.9360);">25.0</span>
<span class="t" style="top:608.00px;font-size:13.9px;color:#000;-webkit-text-stroke:0.25px #000;left:162.60px;transform:scaleX(0.9631);">Solar Power Cost</span>
<span class="t" style="top:608.00px;font-size:13.9px;color:#404040;-webkit-text-stroke:0.25px #404040;left:777.40px;transform:scaleX(0.9677);">US$/kwh</span>
<span class="t" style="top:608.00px;font-size:13.9px;color:#000;-webkit-text-stroke:0.25px #000;left:511.00px;transform:scaleX(0.9598);">0.0%</span>
<div style="left:950.5px;top:619px;width:4.0px;height:1px;background:#0a0a0a;"></div>
<div style="left:1054.6px;top:619px;width:4.0px;height:1px;background:#0a0a0a;"></div>
<div style="left:1159.5px;top:619px;width:4.0px;height:1px;background:#0a0a0a;"></div>
<div style="left:1264.5px;top:619px;width:4.0px;height:1px;background:#0a0a0a;"></div>
<div style="left:1369.5px;top:619px;width:4.0px;height:1px;background:#0a0a0a;"></div>
<div style="left:1474.5px;top:619px;width:4.0px;height:1px;background:#0a0a0a;"></div>
<div style="left:1579.5px;top:619px;width:4.0px;height:1px;background:#0a0a0a;"></div>
<div style="left:1684.5px;top:619px;width:4.0px;height:1px;background:#0a0a0a;"></div>
<span class="t" style="top:608.00px;font-size:13.9px;color:#000;-webkit-text-stroke:0.25px #000;left:1748.62px;transform:scaleX(0.9360);">0.5500</span>
<span class="t" style="top:608.00px;font-size:13.9px;color:#000;-webkit-text-stroke:0.25px #000;left:1844.52px;transform:scaleX(0.9360);">0.5500</span>
<span class="t" style="top:628.00px;font-size:13.9px;color:#000;-webkit-text-stroke:0.25px #000;left:162.60px;transform:scaleX(0.9695);">Indexation - Fixed Capacity Charge</span>
<span class="t" style="top:628.00px;font-size:13.9px;color:#404040;-webkit-text-stroke:0.25px #404040;left:793.25px;transform:scaleX(1.0220);">No.</span>
<span class="t" style="top:628.00px;font-size:13.9px;color:#000;-webkit-text-stroke:0.25px #000;left:688.65px;transform:scaleX(0.9404);">Low Case</span>
<span class="t" style="top:628.00px;font-size:13.9px;color:#000;-webkit-text-stroke:0.25px #000;left:909.62px;transform:scaleX(0.9360);">1.0000</span>
<span class="t" style="top:628.00px;font-size:13.9px;color:#000;-webkit-text-stroke:0.25px #000;left:1013.72px;transform:scaleX(0.9360);">1.0000</span>
<span class="t" style="top:628.00px;font-size:13.9px;color:#000;-webkit-text-stroke:0.25px #000;left:1118.62px;transform:scaleX(0.9360);">1.0000</span>
<span class="t" style="top:628.00px;font-size:13.9px;color:#000;-webkit-text-stroke:0.25px #000;left:1223.62px;transform:scaleX(0.9360);">1.0000</span>
<span class="t" style="top:628.00px;font-size:13.9px;color:#000;-webkit-text-stroke:0.25px #000;left:1328.62px;transform:scaleX(0.9360);">1.0000</span>
<span class="t" style="top:628.00px;font-size:13.9px;color:#000;-webkit-text-stroke:0.25px #000;left:1433.62px;transform:scaleX(0.9360);">1.0000</span>
<span class="t" style="top:628.00px;font-size:13.9px;color:#000;-webkit-text-stroke:0.25px #000;left:1538.62px;transform:scaleX(0.9360);">1.0000</span>
<span class="t" style="top:628.00px;font-size:13.9px;color:#000;-webkit-text-stroke:0.25px #000;left:1643.62px;transform:scaleX(0.9360);">1.0000</span>
<span class="t" style="top:628.00px;font-size:13.9px;color:#000;-webkit-text-stroke:0.25px #000;left:1748.62px;transform:scaleX(0.9360);">1.0000</span>
<span class="t" style="top:628.00px;font-size:13.9px;color:#000;-webkit-text-stroke:0.25px #000;left:1844.52px;transform:scaleX(0.9360);">1.0000</span>
<span class="t" style="top:648.00px;font-size:13.9px;color:#000;font-weight:700;-webkit-text-stroke:0.25px #000;left:162.60px;transform:scaleX(0.9433);">Solar Power Cost - After Indexation</span>
<span class="t" style="top:648.00px;font-size:13.9px;color:#404040;font-weight:700;-webkit-text-stroke:0.25px #404040;left:776.90px;transform:scaleX(0.9464);">US$/kwh</span>
<div style="left:950.5px;top:658px;width:4.0px;height:2px;background:#0a0a0a;"></div>
<div style="left:1054.6px;top:658px;width:4.0px;height:2px;background:#0a0a0a;"></div>
<div style="left:1159.5px;top:658px;width:4.0px;height:2px;background:#0a0a0a;"></div>
<div style="left:1264.5px;top:658px;width:4.0px;height:2px;background:#0a0a0a;"></div>
<div style="left:1369.5px;top:658px;width:4.0px;height:2px;background:#0a0a0a;"></div>
<div style="left:1474.5px;top:658px;width:4.0px;height:2px;background:#0a0a0a;"></div>
<div style="left:1579.5px;top:658px;width:4.0px;height:2px;background:#0a0a0a;"></div>
<div style="left:1684.5px;top:658px;width:4.0px;height:2px;background:#0a0a0a;"></div>
<span class="t" style="top:648.00px;font-size:13.9px;color:#000;font-weight:700;-webkit-text-stroke:0.25px #000;left:1748.62px;transform:scaleX(0.9360);">0.5500</span>
<span class="t" style="top:648.00px;font-size:13.9px;color:#000;font-weight:700;-webkit-text-stroke:0.25px #000;left:1844.52px;transform:scaleX(0.9360);">0.5500</span>
<span class="t" style="top:688.00px;font-size:13.9px;color:#000;-webkit-text-stroke:0.25px #000;left:162.60px;transform:scaleX(0.9701);">Wind Power Cost</span>
<span class="t" style="top:688.00px;font-size:13.9px;color:#404040;-webkit-text-stroke:0.25px #404040;left:777.40px;transform:scaleX(0.9677);">US$/kwh</span>
<span class="t" style="top:688.00px;font-size:13.9px;color:#000;-webkit-text-stroke:0.25px #000;left:511.00px;transform:scaleX(0.9598);">0.0%</span>
<div style="left:950.5px;top:699px;width:4.0px;height:1px;background:#0a0a0a;"></div>
<div style="left:1054.6px;top:699px;width:4.0px;height:1px;background:#0a0a0a;"></div>
<div style="left:1159.5px;top:699px;width:4.0px;height:1px;background:#0a0a0a;"></div>
<div style="left:1264.5px;top:699px;width:4.0px;height:1px;background:#0a0a0a;"></div>
<div style="left:1369.5px;top:699px;width:4.0px;height:1px;background:#0a0a0a;"></div>
<div style="left:1474.5px;top:699px;width:4.0px;height:1px;background:#0a0a0a;"></div>
<div style="left:1579.5px;top:699px;width:4.0px;height:1px;background:#0a0a0a;"></div>
<div style="left:1684.5px;top:699px;width:4.0px;height:1px;background:#0a0a0a;"></div>
<span class="t" style="top:688.00px;font-size:13.9px;color:#000;-webkit-text-stroke:0.25px #000;left:1748.62px;transform:scaleX(0.9360);">0.5500</span>
<span class="t" style="top:688.00px;font-size:13.9px;color:#000;-webkit-text-stroke:0.25px #000;left:1844.52px;transform:scaleX(0.9360);">0.5500</span>
<span class="t" style="top:708.00px;font-size:13.9px;color:#000;-webkit-text-stroke:0.25px #000;left:162.60px;transform:scaleX(0.9695);">Indexation - Fixed Capacity Charge</span>
<span class="t" style="top:708.00px;font-size:13.9px;color:#404040;-webkit-text-stroke:0.25px #404040;left:793.25px;transform:scaleX(1.0220);">No.</span>
<span class="t" style="top:708.00px;font-size:13.9px;color:#000;-webkit-text-stroke:0.25px #000;left:688.65px;transform:scaleX(0.9404);">Low Case</span>
<span class="t" style="top:708.00px;font-size:13.9px;color:#000;-webkit-text-stroke:0.25px #000;left:909.62px;transform:scaleX(0.9360);">1.0000</span>
<span class="t" style="top:708.00px;font-size:13.9px;color:#000;-webkit-text-stroke:0.25px #000;left:1013.72px;transform:scaleX(0.9360);">1.0000</span>
<span class="t" style="top:708.00px;font-size:13.9px;color:#000;-webkit-text-stroke:0.25px #000;left:1118.62px;transform:scaleX(0.9360);">1.0000</span>
<span class="t" style="top:708.00px;font-size:13.9px;color:#000;-webkit-text-stroke:0.25px #000;left:1223.62px;transform:scaleX(0.9360);">1.0000</span>
<span class="t" style="top:708.00px;font-size:13.9px;color:#000;-webkit-text-stroke:0.25px #000;left:1328.62px;transform:scaleX(0.9360);">1.0000</span>
<span class="t" style="top:708.00px;font-size:13.9px;color:#000;-webkit-text-stroke:0.25px #000;left:1433.62px;transform:scaleX(0.9360);">1.0000</span>
<span class="t" style="top:708.00px;font-size:13.9px;color:#000;-webkit-text-stroke:0.25px #000;left:1538.62px;transform:scaleX(0.9360);">1.0000</span>
<span class="t" style="top:708.00px;font-size:13.9px;color:#000;-webkit-text-stroke:0.25px #000;left:1643.62px;transform:scaleX(0.9360);">1.0000</span>
<span class="t" style="top:708.00px;font-size:13.9px;color:#000;-webkit-text-stroke:0.25px #000;left:1748.62px;transform:scaleX(0.9360);">1.0000</span>
<span class="t" style="top:708.00px;font-size:13.9px;color:#000;-webkit-text-stroke:0.25px #000;left:1844.52px;transform:scaleX(0.9360);">1.0000</span>
<span class="t" style="top:728.00px;font-size:13.9px;color:#000;font-weight:700;-webkit-text-stroke:0.25px #000;left:162.60px;transform:scaleX(0.9514);">Wind Power Cost - After Indexation</span>
<span class="t" style="top:728.00px;font-size:13.9px;color:#404040;font-weight:700;-webkit-text-stroke:0.25px #404040;left:776.90px;transform:scaleX(0.9464);">US$/kwh</span>
<div style="left:950.5px;top:738px;width:4.0px;height:2px;background:#0a0a0a;"></div>
<div style="left:1054.6px;top:738px;width:4.0px;height:2px;background:#0a0a0a;"></div>
<div style="left:1159.5px;top:738px;width:4.0px;height:2px;background:#0a0a0a;"></div>
<div style="left:1264.5px;top:738px;width:4.0px;height:2px;background:#0a0a0a;"></div>
<div style="left:1369.5px;top:738px;width:4.0px;height:2px;background:#0a0a0a;"></div>
<div style="left:1474.5px;top:738px;width:4.0px;height:2px;background:#0a0a0a;"></div>
<div style="left:1579.5px;top:738px;width:4.0px;height:2px;background:#0a0a0a;"></div>
<div style="left:1684.5px;top:738px;width:4.0px;height:2px;background:#0a0a0a;"></div>
<span class="t" style="top:728.00px;font-size:13.9px;color:#000;font-weight:700;-webkit-text-stroke:0.25px #000;left:1748.62px;transform:scaleX(0.9360);">0.5500</span>
<span class="t" style="top:728.00px;font-size:13.9px;color:#000;font-weight:700;-webkit-text-stroke:0.25px #000;left:1844.52px;transform:scaleX(0.9360);">0.5500</span>
<span class="t" style="top:768.00px;font-size:13.9px;color:#000;font-weight:700;-webkit-text-stroke:0.25px #000;left:162.60px;transform:scaleX(0.9533);">Green Power Cost</span>
<span class="t" style="top:768.00px;font-size:13.9px;color:#404040;font-weight:700;-webkit-text-stroke:0.25px #404040;left:780.80px;transform:scaleX(0.9088);">US$ mn</span>
<span class="t" style="top:768.00px;font-size:13.9px;color:#000;font-weight:700;-webkit-text-stroke:0.25px #000;left:622.60px;transform:scaleX(0.9664);">4,933.7</span>
<div style="left:950.5px;top:778px;width:4.0px;height:2px;background:#0a0a0a;"></div>
<div style="left:1054.6px;top:778px;width:4.0px;height:2px;background:#0a0a0a;"></div>
<div style="left:1159.5px;top:778px;width:4.0px;height:2px;background:#0a0a0a;"></div>
<div style="left:1264.5px;top:778px;width:4.0px;height:2px;background:#0a0a0a;"></div>
<div style="left:1369.5px;top:778px;width:4.0px;height:2px;background:#0a0a0a;"></div>
<div style="left:1474.5px;top:778px;width:4.0px;height:2px;background:#0a0a0a;"></div>
<div style="left:1579.5px;top:778px;width:4.0px;height:2px;background:#0a0a0a;"></div>
<div style="left:1684.5px;top:778px;width:4.0px;height:2px;background:#0a0a0a;"></div>
<span class="t" style="top:768.00px;font-size:13.9px;color:#000;font-weight:700;-webkit-text-stroke:0.25px #000;left:1763.08px;transform:scaleX(0.9360);">41.3</span>
<span class="t" style="top:768.00px;font-size:13.9px;color:#000;font-weight:700;-webkit-text-stroke:0.25px #000;left:1858.98px;transform:scaleX(0.9360);">41.3</span>
<span class="t" style="top:828.00px;font-size:13.9px;color:#000;-webkit-text-stroke:0.25px #000;left:162.60px;transform:scaleX(1.0045);">Water Consumption</span>
<span class="t" style="top:828.00px;font-size:13.9px;color:#404040;-webkit-text-stroke:0.25px #404040;left:774.75px;transform:scaleX(1.0343);">tons/year</span>
<div style="left:950.5px;top:839px;width:4.0px;height:1px;background:#0a0a0a;"></div>
<div style="left:1054.6px;top:839px;width:4.0px;height:1px;background:#0a0a0a;"></div>
<div style="left:1159.5px;top:839px;width:4.0px;height:1px;background:#0a0a0a;"></div>
<div style="left:1264.5px;top:839px;width:4.0px;height:1px;background:#0a0a0a;"></div>
<div style="left:1369.5px;top:839px;width:4.0px;height:1px;background:#0a0a0a;"></div>
<div style="left:1474.5px;top:839px;width:4.0px;height:1px;background:#0a0a0a;"></div>
<div style="left:1579.5px;top:839px;width:4.0px;height:1px;background:#0a0a0a;"></div>
<div style="left:1684.5px;top:839px;width:4.0px;height:1px;background:#0a0a0a;"></div>
<span class="t" style="top:828.00px;font-size:13.9px;color:#000;-webkit-text-stroke:0.25px #000;left:1745.01px;transform:scaleX(0.9360);">9,053.0</span>
<span class="t" style="top:828.00px;font-size:13.9px;color:#000;-webkit-text-stroke:0.25px #000;left:1840.91px;transform:scaleX(0.9360);">9,053.0</span>
<span class="t" style="top:848.00px;font-size:13.9px;color:#000;-webkit-text-stroke:0.25px #000;left:162.60px;transform:scaleX(1.0201);">Water Tariff unit cost</span>
<span class="t" style="top:848.00px;font-size:13.9px;color:#404040;-webkit-text-stroke:0.25px #404040;left:779.90px;transform:scaleX(0.9721);">US$/ton</span>
<span class="t" style="top:848.00px;font-size:13.9px;color:#000;-webkit-text-stroke:0.25px #000;left:511.00px;transform:scaleX(0.9598);">0.0%</span>
<div style="left:950.5px;top:859px;width:4.0px;height:1px;background:#0a0a0a;"></div>
<div style="left:1054.6px;top:859px;width:4.0px;height:1px;background:#0a0a0a;"></div>
<div style="left:1159.5px;top:859px;width:4.0px;height:1px;background:#0a0a0a;"></div>
<div style="left:1264.5px;top:859px;width:4.0px;height:1px;background:#0a0a0a;"></div>
<div style="left:1369.5px;top:859px;width:4.0px;height:1px;background:#0a0a0a;"></div>
<div style="left:1474.5px;top:859px;width:4.0px;height:1px;background:#0a0a0a;"></div>
<div style="left:1579.5px;top:859px;width:4.0px;height:1px;background:#0a0a0a;"></div>
<div style="left:1684.5px;top:859px;width:4.0px;height:1px;background:#0a0a0a;"></div>
<span class="t" style="top:848.00px;font-size:13.9px;color:#000;-webkit-text-stroke:0.25px #000;left:1748.62px;transform:scaleX(0.9360);">0.3500</span>
<span class="t" style="top:848.00px;font-size:13.9px;color:#000;-webkit-text-stroke:0.25px #000;left:1844.52px;transform:scaleX(0.9360);">0.3500</span>
<span class="t" style="top:868.00px;font-size:13.9px;color:#000;-webkit-text-stroke:0.25px #000;left:162.60px;transform:scaleX(0.9695);">Indexation - Fixed Capacity Charge</span>
<span class="t" style="top:868.00px;font-size:13.9px;color:#404040;-webkit-text-stroke:0.25px #404040;left:793.25px;transform:scaleX(1.0220);">No.</span>
<span class="t" style="top:868.00px;font-size:13.9px;color:#000;-webkit-text-stroke:0.25px #000;left:688.65px;transform:scaleX(0.9404);">Low Case</span>
<span class="t" style="top:868.00px;font-size:13.9px;color:#000;-webkit-text-stroke:0.25px #000;left:909.62px;transform:scaleX(0.9360);">1.0000</span>
<span class="t" style="top:868.00px;font-size:13.9px;color:#000;-webkit-text-stroke:0.25px #000;left:1013.72px;transform:scaleX(0.9360);">1.0000</span>
<span class="t" style="top:868.00px;font-size:13.9px;color:#000;-webkit-text-stroke:0.25px #000;left:1118.62px;transform:scaleX(0.9360);">1.0000</span>
<span class="t" style="top:868.00px;font-size:13.9px;color:#000;-webkit-text-stroke:0.25px #000;left:1223.62px;transform:scaleX(0.9360);">1.0000</span>
<span class="t" style="top:868.00px;font-size:13.9px;color:#000;-webkit-text-stroke:0.25px #000;left:1328.62px;transform:scaleX(0.9360);">1.0000</span>
<span class="t" style="top:868.00px;font-size:13.9px;color:#000;-webkit-text-stroke:0.25px #000;left:1433.62px;transform:scaleX(0.9360);">1.0000</span>
<span class="t" style="top:868.00px;font-size:13.9px;color:#000;-webkit-text-stroke:0.25px #000;left:1538.62px;transform:scaleX(0.9360);">1.0000</span>
<span class="t" style="top:868.00px;font-size:13.9px;color:#000;-webkit-text-stroke:0.25px #000;left:1643.62px;transform:scaleX(0.9360);">1.0000</span>
<span class="t" style="top:868.00px;font-size:13.9px;color:#000;-webkit-text-stroke:0.25px #000;left:1748.62px;transform:scaleX(0.9360);">1.0000</span>
<span class="t" style="top:868.00px;font-size:13.9px;color:#000;-webkit-text-stroke:0.25px #000;left:1844.52px;transform:scaleX(0.9360);">1.0000</span>
<span class="t" style="top:888.00px;font-size:13.9px;color:#000;font-weight:700;-webkit-text-stroke:0.25px #000;left:162.60px;transform:scaleX(0.9861);">Water Cost</span>
<span class="t" style="top:888.00px;font-size:13.9px;color:#404040;font-weight:700;-webkit-text-stroke:0.25px #404040;left:780.80px;transform:scaleX(0.9088);">US$ mn</span>
<span class="t" style="top:888.00px;font-size:13.9px;color:#000;font-weight:700;-webkit-text-stroke:0.25px #000;left:648.30px;transform:scaleX(0.9890);">0.4</span>
<div style="left:950.5px;top:898px;width:4.0px;height:2px;background:#0a0a0a;"></div>
<div style="left:1054.6px;top:898px;width:4.0px;height:2px;background:#0a0a0a;"></div>
<div style="left:1159.5px;top:898px;width:4.0px;height:2px;background:#0a0a0a;"></div>
<div style="left:1264.5px;top:898px;width:4.0px;height:2px;background:#0a0a0a;"></div>
<div style="left:1369.5px;top:898px;width:4.0px;height:2px;background:#0a0a0a;"></div>
<div style="left:1474.5px;top:898px;width:4.0px;height:2px;background:#0a0a0a;"></div>
<div style="left:1579.5px;top:898px;width:4.0px;height:2px;background:#0a0a0a;"></div>
<div style="left:1684.5px;top:898px;width:4.0px;height:2px;background:#0a0a0a;"></div>
<span class="t" style="top:888.00px;font-size:13.9px;color:#000;font-weight:700;-webkit-text-stroke:0.25px #000;left:1748.62px;transform:scaleX(0.9360);">0.0032</span>
<span class="t" style="top:888.00px;font-size:13.9px;color:#000;font-weight:700;-webkit-text-stroke:0.25px #000;left:1844.52px;transform:scaleX(0.9360);">0.0032</span>
<span class="t" style="top:21.70px;font-size:14.6px;color:#111;-webkit-text-stroke:0.25px #111;left:12.70px;transform:scaleX(1.0992);">O9</span>
<span class="t" style="top:58.00px;font-size:11.7px;color:#0a0a0a;-webkit-text-stroke:0.25px #0a0a0a;left:27.60px;">A</span>
<span class="t" style="top:58.00px;font-size:11.7px;color:#0a0a0a;-webkit-text-stroke:0.25px #0a0a0a;left:39.60px;">B</span>
<span class="t" style="top:58.00px;font-size:11.7px;color:#0a0a0a;-webkit-text-stroke:0.25px #0a0a0a;left:57.27px;">C</span>
<span class="t" style="top:58.00px;font-size:11.7px;color:#0a0a0a;-webkit-text-stroke:0.25px #0a0a0a;left:90.27px;">D</span>
<span class="t" style="top:58.00px;font-size:11.7px;color:#0a0a0a;-webkit-text-stroke:0.25px #0a0a0a;left:116.60px;">E</span>
<span class="t" style="top:58.00px;font-size:11.7px;color:#0a0a0a;-webkit-text-stroke:0.25px #0a0a0a;left:126.93px;">F</span>
<span class="t" style="top:58.00px;font-size:11.7px;color:#0a0a0a;-webkit-text-stroke:0.25px #0a0a0a;left:143.45px;">G</span>
<span class="t" style="top:58.00px;font-size:11.7px;color:#0a0a0a;-webkit-text-stroke:0.25px #0a0a0a;left:313.27px;">H</span>
<span class="t" style="top:58.00px;font-size:11.7px;color:#0a0a0a;-webkit-text-stroke:0.25px #0a0a0a;left:477.38px;">I</span>
<span class="t" style="top:58.00px;font-size:11.7px;color:#0a0a0a;-webkit-text-stroke:0.25px #0a0a0a;left:523.08px;">J</span>
<span class="t" style="top:58.00px;font-size:11.7px;color:#0a0a0a;-webkit-text-stroke:0.25px #0a0a0a;left:617.60px;">K</span>
<span class="t" style="top:58.00px;font-size:11.7px;color:#0a0a0a;-webkit-text-stroke:0.25px #0a0a0a;left:713.74px;">L</span>
<span class="t" style="top:58.00px;font-size:11.7px;color:#0a0a0a;-webkit-text-stroke:0.25px #0a0a0a;left:799.12px;">M</span>
<span class="t" style="top:58.00px;font-size:11.7px;color:#0a0a0a;-webkit-text-stroke:0.25px #0a0a0a;left:848.77px;">N</span>
<span class="t" style="top:58.00px;font-size:11.7px;color:#fff;-webkit-text-stroke:0.25px #fff;left:902.95px;">O</span>
<span class="t" style="top:58.00px;font-size:11.7px;color:#0a0a0a;-webkit-text-stroke:0.25px #0a0a0a;left:1005.60px;">P</span>
<span class="t" style="top:58.00px;font-size:11.7px;color:#0a0a0a;-webkit-text-stroke:0.25px #0a0a0a;left:1109.45px;">Q</span>
<span class="t" style="top:58.00px;font-size:11.7px;color:#0a0a0a;-webkit-text-stroke:0.25px #0a0a0a;left:1214.77px;">R</span>
<span class="t" style="top:58.00px;font-size:11.7px;color:#0a0a0a;-webkit-text-stroke:0.25px #0a0a0a;left:1320.10px;">S</span>
<span class="t" style="top:58.00px;font-size:11.7px;color:#0a0a0a;-webkit-text-stroke:0.25px #0a0a0a;left:1425.43px;">T</span>
<span class="t" style="top:58.00px;font-size:11.7px;color:#0a0a0a;-webkit-text-stroke:0.25px #0a0a0a;left:1529.77px;">U</span>
<span class="t" style="top:58.00px;font-size:11.7px;color:#0a0a0a;-webkit-text-stroke:0.25px #0a0a0a;left:1635.10px;">V</span>
<span class="t" style="top:58.00px;font-size:11.7px;color:#0a0a0a;-webkit-text-stroke:0.25px #0a0a0a;left:1738.48px;">W</span>
<span class="t" style="top:58.00px;font-size:11.7px;color:#0a0a0a;-webkit-text-stroke:0.25px #0a0a0a;left:1840.60px;">X</span>
<span class="t" style="top:83.00px;font-size:12.6px;color:#0a0a0a;-webkit-text-stroke:0.25px #0a0a0a;left:9.09px;">1</span>
<span class="t" style="top:111.00px;font-size:12.6px;color:#0a0a0a;-webkit-text-stroke:0.25px #0a0a0a;left:9.09px;">2</span>
<span class="t" style="top:133.00px;font-size:12.6px;color:#0a0a0a;-webkit-text-stroke:0.25px #0a0a0a;left:9.09px;">3</span>
<span class="t" style="top:152.00px;font-size:12.6px;color:#0a0a0a;-webkit-text-stroke:0.25px #0a0a0a;left:9.09px;">4</span>
<span class="t" style="top:171.00px;font-size:12.6px;color:#0a0a0a;-webkit-text-stroke:0.25px #0a0a0a;left:9.09px;">5</span>
<span class="t" style="top:190.00px;font-size:12.6px;color:#0a0a0a;-webkit-text-stroke:0.25px #0a0a0a;left:9.09px;">6</span>
<span class="t" style="top:209.00px;font-size:12.6px;color:#0a0a0a;-webkit-text-stroke:0.25px #0a0a0a;left:9.09px;">7</span>
<span class="t" style="top:229.00px;font-size:12.6px;color:#0a0a0a;-webkit-text-stroke:0.25px #0a0a0a;left:9.09px;">8</span>
<span class="t" style="top:249.00px;font-size:12.6px;color:#fff;-webkit-text-stroke:0.25px #fff;left:9.09px;">9</span>
<span class="t" style="top:269.00px;font-size:12.6px;color:#0a0a0a;-webkit-text-stroke:0.25px #0a0a0a;left:6.19px;">10</span>
<span class="t" style="top:289.00px;font-size:12.6px;color:#0a0a0a;-webkit-text-stroke:0.25px #0a0a0a;left:6.66px;">11</span>
<span class="t" style="top:309.00px;font-size:12.6px;color:#0a0a0a;-webkit-text-stroke:0.25px #0a0a0a;left:6.19px;">12</span>
<span class="t" style="top:329.00px;font-size:12.6px;color:#0a0a0a;-webkit-text-stroke:0.25px #0a0a0a;left:6.19px;">13</span>
<span class="t" style="top:349.00px;font-size:12.6px;color:#0a0a0a;-webkit-text-stroke:0.25px #0a0a0a;left:6.19px;">14</span>
<span class="t" style="top:369.00px;font-size:12.6px;color:#0a0a0a;-webkit-text-stroke:0.25px #0a0a0a;left:6.19px;">15</span>
<span class="t" style="top:389.00px;font-size:12.6px;color:#0a0a0a;-webkit-text-stroke:0.25px #0a0a0a;left:6.19px;">16</span>
<span class="t" style="top:409.00px;font-size:12.6px;color:#0a0a0a;-webkit-text-stroke:0.25px #0a0a0a;left:6.19px;">17</span>
<span class="t" style="top:429.00px;font-size:12.6px;color:#0a0a0a;-webkit-text-stroke:0.25px #0a0a0a;left:6.19px;">18</span>
<span class="t" style="top:449.00px;font-size:12.6px;color:#0a0a0a;-webkit-text-stroke:0.25px #0a0a0a;left:6.19px;">19</span>
<span class="t" style="top:469.00px;font-size:12.6px;color:#0a0a0a;-webkit-text-stroke:0.25px #0a0a0a;left:6.19px;">20</span>
<span class="t" style="top:489.00px;font-size:12.6px;color:#0a0a0a;-webkit-text-stroke:0.25px #0a0a0a;left:6.19px;">21</span>
<span class="t" style="top:509.00px;font-size:12.6px;color:#0a0a0a;-webkit-text-stroke:0.25px #0a0a0a;left:6.19px;">22</span>
<span class="t" style="top:529.00px;font-size:12.6px;color:#0a0a0a;-webkit-text-stroke:0.25px #0a0a0a;left:6.19px;">23</span>
<span class="t" style="top:549.00px;font-size:12.6px;color:#0a0a0a;-webkit-text-stroke:0.25px #0a0a0a;left:6.19px;">24</span>
<span class="t" style="top:569.00px;font-size:12.6px;color:#0a0a0a;-webkit-text-stroke:0.25px #0a0a0a;left:6.19px;">25</span>
<span class="t" style="top:589.00px;font-size:12.6px;color:#0a0a0a;-webkit-text-stroke:0.25px #0a0a0a;left:6.19px;">26</span>
<span class="t" style="top:609.00px;font-size:12.6px;color:#0a0a0a;-webkit-text-stroke:0.25px #0a0a0a;left:6.19px;">27</span>
<span class="t" style="top:629.00px;font-size:12.6px;color:#0a0a0a;-webkit-text-stroke:0.25px #0a0a0a;left:6.19px;">28</span>
<span class="t" style="top:649.00px;font-size:12.6px;color:#0a0a0a;-webkit-text-stroke:0.25px #0a0a0a;left:6.19px;">29</span>
<span class="t" style="top:669.00px;font-size:12.6px;color:#0a0a0a;-webkit-text-stroke:0.25px #0a0a0a;left:6.19px;">30</span>
<span class="t" style="top:689.00px;font-size:12.6px;color:#0a0a0a;-webkit-text-stroke:0.25px #0a0a0a;left:6.19px;">31</span>
<span class="t" style="top:709.00px;font-size:12.6px;color:#0a0a0a;-webkit-text-stroke:0.25px #0a0a0a;left:6.19px;">32</span>
<span class="t" style="top:729.00px;font-size:12.6px;color:#0a0a0a;-webkit-text-stroke:0.25px #0a0a0a;left:6.19px;">33</span>
<span class="t" style="top:749.00px;font-size:12.6px;color:#0a0a0a;-webkit-text-stroke:0.25px #0a0a0a;left:6.19px;">34</span>
<span class="t" style="top:769.00px;font-size:12.6px;color:#0a0a0a;-webkit-text-stroke:0.25px #0a0a0a;left:6.19px;">35</span>
<span class="t" style="top:789.00px;font-size:12.6px;color:#0a0a0a;-webkit-text-stroke:0.25px #0a0a0a;left:6.19px;">36</span>
<span class="t" style="top:809.00px;font-size:12.6px;color:#0a0a0a;-webkit-text-stroke:0.25px #0a0a0a;left:6.19px;">37</span>
<span class="t" style="top:829.00px;font-size:12.6px;color:#0a0a0a;-webkit-text-stroke:0.25px #0a0a0a;left:6.19px;">38</span>
<span class="t" style="top:849.00px;font-size:12.6px;color:#0a0a0a;-webkit-text-stroke:0.25px #0a0a0a;left:6.19px;">39</span>
<span class="t" style="top:869.00px;font-size:12.6px;color:#0a0a0a;-webkit-text-stroke:0.25px #0a0a0a;left:6.19px;">40</span>
<span class="t" style="top:889.00px;font-size:12.6px;color:#0a0a0a;-webkit-text-stroke:0.25px #0a0a0a;left:6.19px;">41</span>
<span class="t" style="top:910.00px;font-size:16.2px;color:#d4d4d4;left:125.40px;transform:scaleX(1.0169);">Read Me</span>
<span class="t" style="top:910.00px;font-size:16.2px;color:#000;-webkit-text-stroke:0.15px #000;left:219.65px;transform:scaleX(1.0517);">Dashboard</span>
<span class="t" style="top:910.00px;font-size:16.2px;color:#000;-webkit-text-stroke:0.15px #000;left:330.90px;transform:scaleX(0.9918);">Fin_Stat</span>
<span class="t" style="top:910.00px;font-size:16.2px;color:#000;-webkit-text-stroke:0.15px #000;left:419.40px;transform:scaleX(0.9714);">Fin_Stat_A</span>
<span class="t" style="top:910.00px;font-size:16.2px;color:#000;-webkit-text-stroke:0.15px #000;left:524.40px;transform:scaleX(0.9504);">KPI</span>
<span class="t" style="top:910.00px;font-size:16.2px;color:#000;-webkit-text-stroke:0.15px #000;left:577.40px;transform:scaleX(1.0401);">Sensitivity</span>
<span class="t" style="top:910.00px;font-size:16.2px;color:#000;-webkit-text-stroke:0.15px #000;left:681.40px;transform:scaleX(1.1063);">Inputs</span>
<span class="t" style="top:910.00px;font-size:16.2px;color:#d4d4d4;left:756.65px;transform:scaleX(1.0817);">Construction</span>
<span class="t" style="top:910.00px;font-size:16.2px;color:#d4d4d4;left:994.90px;transform:scaleX(1.0564);">Funding</span>
<span class="t" style="top:943.00px;font-size:12.5px;color:#1a1a1a;-webkit-text-stroke:0.1px #1a1a1a;left:14.00px;transform:scaleX(1.0072);">Ready</span>
<span class="t" style="top:943.00px;font-size:12.5px;color:#1a1a1a;font-weight:700;left:137.60px;transform:scaleX(1.0249);">Accessibility: Investigate</span>
<span class="t" style="top:943.00px;font-size:12.5px;color:#1a1a1a;-webkit-text-stroke:0.1px #1a1a1a;left:1437.30px;transform:scaleX(1.0276);">Display Settings</span>
<span class="t" style="top:943.00px;font-size:12.5px;color:#1a1a1a;-webkit-text-stroke:0.1px #1a1a1a;left:1883.00px;transform:scaleX(1.0267);">80%</span>
</body></html>
